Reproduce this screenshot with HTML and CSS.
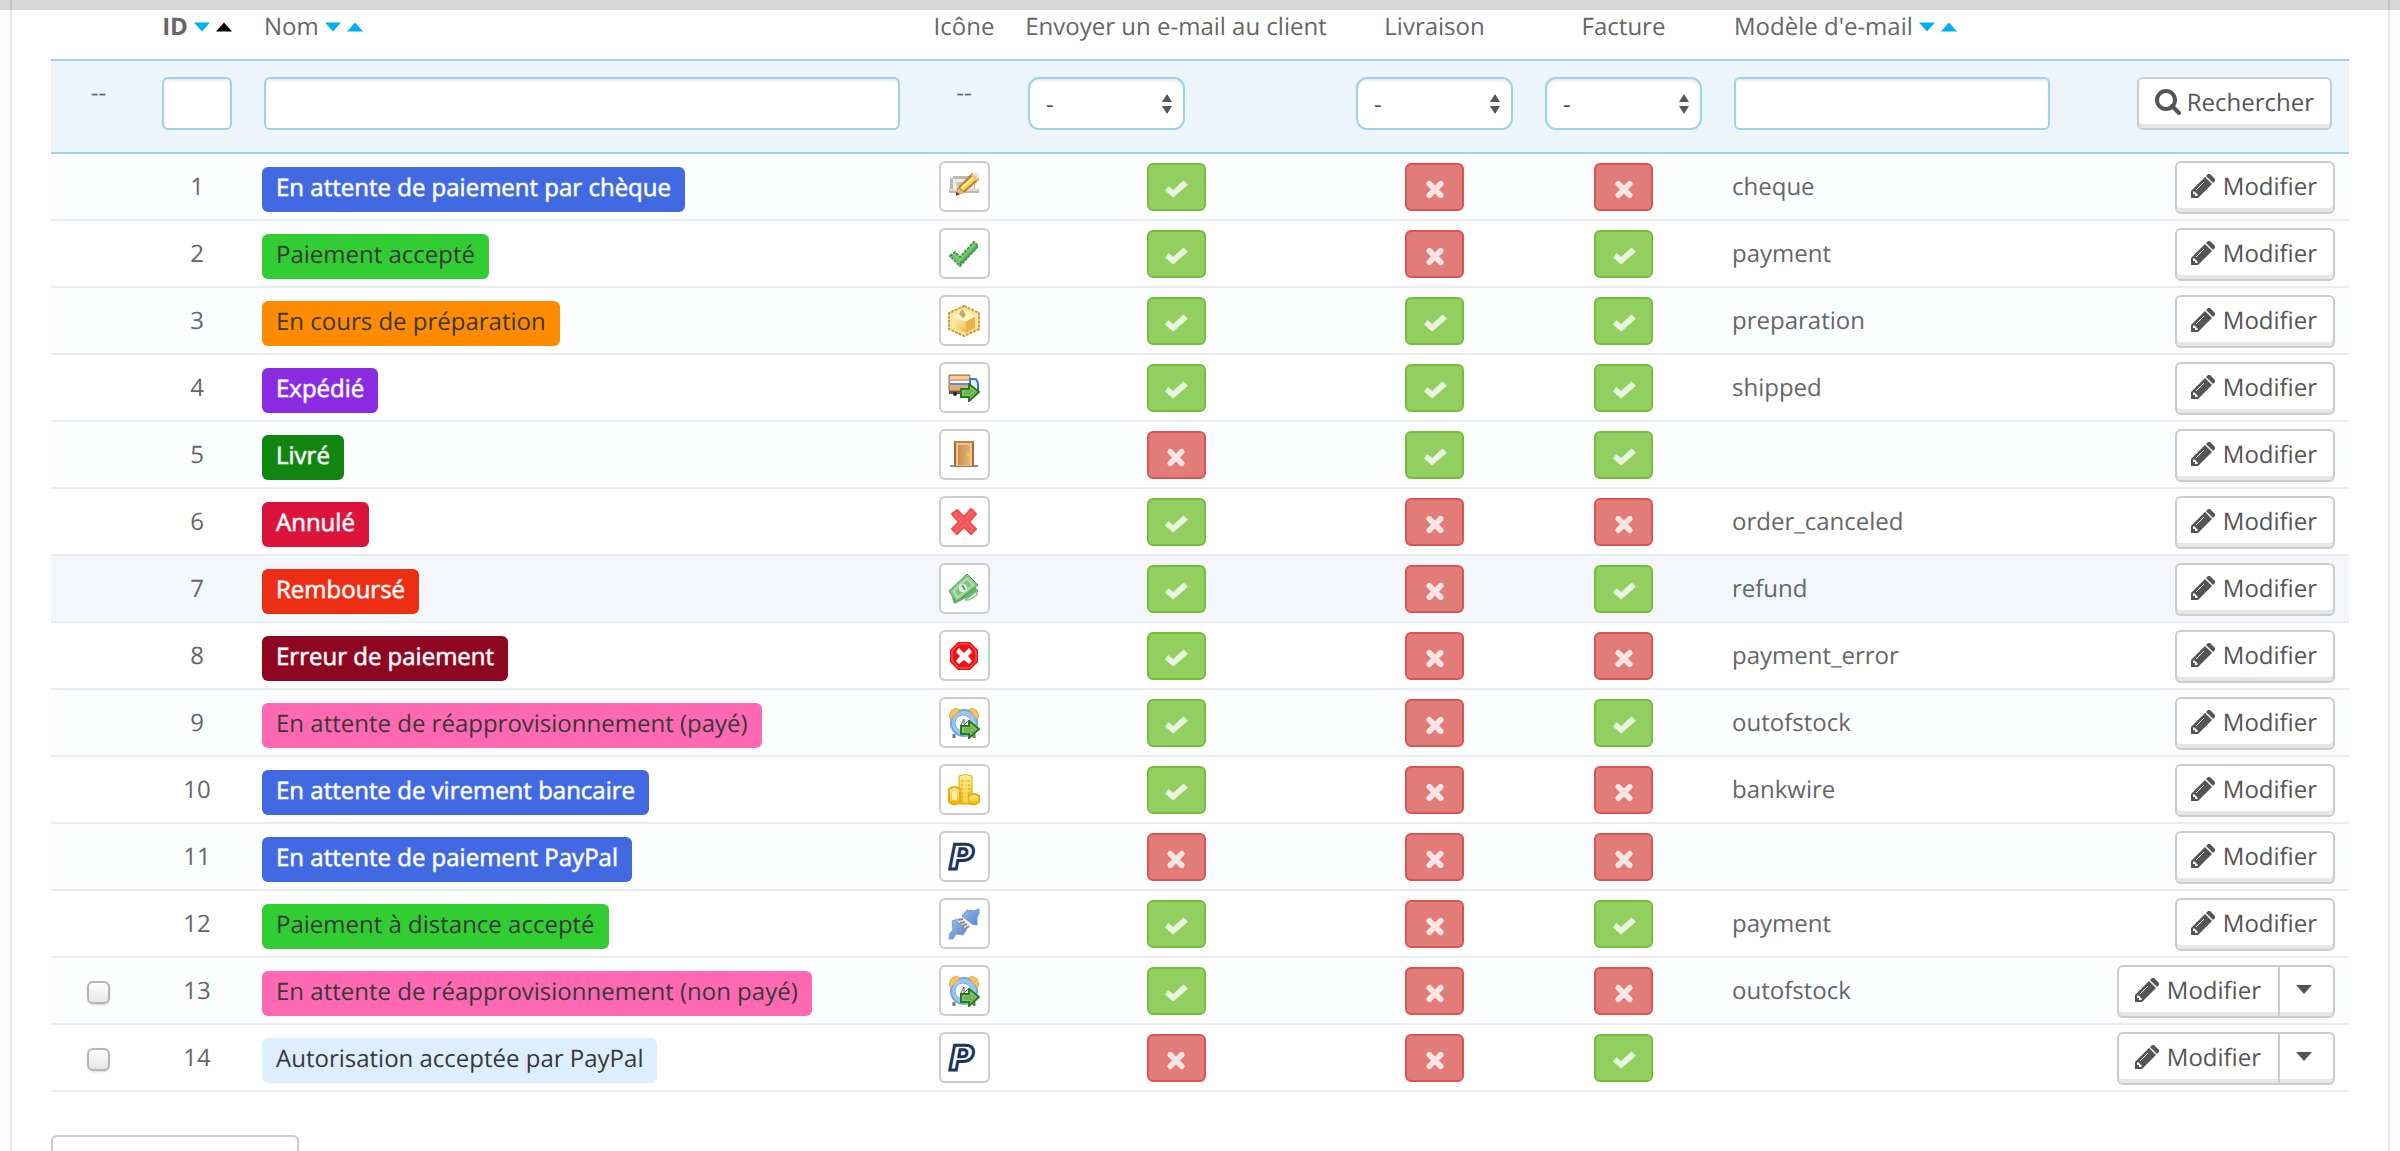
FILE: index.html
```html
<!DOCTYPE html>
<html lang="fr">
<head>
<meta charset="utf-8">
<title>Statuts de commande</title>
<link rel="stylesheet" href="styles.css">
</head>
<body>
<svg class="sprite" aria-hidden="true">
  <defs>
    <linearGradient id="g-gold" x1="0" y1="0" x2="0" y2="1"><stop offset="0" stop-color="#fff0a0"/><stop offset="1" stop-color="#f0b400"/></linearGradient>
    <linearGradient id="g-door" x1="0" y1="0" x2="1" y2="0"><stop offset="0" stop-color="#c98f50"/><stop offset="1" stop-color="#e2b279"/></linearGradient>
    <linearGradient id="g-blue" x1="0" y1="0" x2="1" y2="1"><stop offset="0" stop-color="#9cbcec"/><stop offset="1" stop-color="#5583cd"/></linearGradient>
    <linearGradient id="g-box" x1="0" y1="0" x2="1" y2="1"><stop offset="0" stop-color="#fff2b8"/><stop offset="1" stop-color="#eebd4c"/></linearGradient>
  </defs>
  <symbol id="i-cheque" viewBox="0 0 32 32">
    <path d="M2 18V7h3V5h22v13h4v4H1v-4z" fill="#b9bbb9"/>
    <path d="M5 8h21v10H5z" fill="#eceeea"/><path d="M8 11h9v4H8z" fill="#c6cac4"/><path d="M2 19h28" stroke="#d9dbd9" stroke-width="2"/>
    <path d="M9 17 24 2h4l3 3v4L16 22l-7 2z" fill="#c87f25"/>
    <path d="M12 17 25 5l4 3-14 12z" fill="#fbd53c"/><path d="m13 16 12-11 2 1-13 12z" fill="#fff3a0"/>
    <path d="m23 4 2-2h3l3 3v3l-2 2z" fill="#efbd91"/><path d="m25 3 4 1 1 3" stroke="#fbeee2" stroke-width="2" fill="none"/>
    <path d="m10 17 6 5-7 2z" fill="#edb786"/><path d="m8 21 4 2-4 2z" fill="#6b3b1c"/>
  </symbol>
  <symbol id="i-tick" viewBox="0 0 32 32">
    <path d="m2 18 5-4 5 5L26 4l4 4-18 20z" fill="#83cb7b" stroke="#3f9a44" stroke-width="2" stroke-dasharray="3 1"/>
    <path d="m5 18 7 6L27 8" fill="none" stroke="#6cbf69" stroke-width="2"/><path d="M12 26 29 9" stroke="#4d994e" stroke-width="2"/>
  </symbol>
  <symbol id="i-box" viewBox="0 0 32 32">
    <path d="M16 1 31 8v16l-15 7L1 24V8z" fill="#fbe6a4" stroke="#d59b30" stroke-width="2" stroke-dasharray="3 1"/>
    <path d="M5 11 16 5l11 6-11 5z" fill="#fff3bf"/><path d="m5 12 13 4v12L5 23z" fill="url(#g-box)"/><path d="m18 16 9-5v12l-9 5z" fill="#eab346"/>
    <path d="m14 4 4 6-3 3-4-4z" fill="#caa765"/><path d="m5 12 13 4 9-5" stroke="#fffbe0" stroke-width="1" fill="none"/>
  </symbol>
  <symbol id="i-arrow" viewBox="0 0 20 19">
    <path d="M1 6h8V1l10 8-10 9v-4H1z" fill="#85c66a" stroke="#2c7a1d" stroke-width="2"/><path d="M4 9h7v-2l4 3-4 3v-2H4" fill="none" stroke="#5aa243" stroke-width="1"/>
  </symbol>
  <symbol id="i-truck" viewBox="0 0 32 32">
    <path d="M1 3h21v16H1z" fill="#e6ab73" stroke="#9a6a3f"/><path d="M2 4h19v3H2z" fill="#f5cda3"/>
    <path d="M2 9h19v4H2z" fill="#f2f6fb"/><path d="M2 11h19v2H2z" fill="#4f93e0"/>
    <path d="M22 7h6l2 4v7h-8z" fill="#e6effa" stroke="#3e78cf" stroke-width="2"/><path d="M1 19h21v3H1z" fill="#5a5a5a"/>
    <circle cx="7" cy="22" r="2" fill="#222"/><circle cx="14" cy="22" r="2" fill="#444"/>
    <use href="#i-arrow" x="12" y="11" width="20" height="19"/>
  </symbol>
  <symbol id="i-door" viewBox="0 0 32 32">
    <path d="M2 26h28v2H2z" fill="#86909a"/><path d="M6 2h20v26H6z" fill="#ab6c31"/><path d="M8 4h16v23H8z" fill="#f0c592"/>
    <path d="M10 6h12v20H10z" fill="url(#g-door)"/><path d="M7 2h18v2H7z" fill="#c4834a"/><circle cx="21" cy="16" r="2" fill="#ffc62b"/>
  </symbol>
  <symbol id="i-cross" viewBox="0 0 32 32">
    <path d="m9 4 7 7 7-8 5 5-7 8 7 7-5 5-7-7-7 7-5-5 7-7-7-8z" fill="#f86a6a" stroke="#f6484d" stroke-width="2" stroke-linejoin="round"/>
    <path d="m9 8 14 16M24 8 8 24" stroke="#e95555" stroke-width="2"/>
  </symbol>
  <symbol id="i-cash" viewBox="0 0 32 32">
    <path d="m6 31-2-6L26 13l4 4-1 3z" fill="#6db26b"/><path d="m17 27 12-9v4l-8 5z" fill="#dcefd8" stroke="#68ad68"/>
    <path d="M1 18 19 1l11 11L8 29z" fill="#83c882" stroke="#479d52"/><path d="M4 18 19 4l8 8L9 26z" fill="#b0dfad"/>
    <path d="M7 18 19 7l5 5-14 11z" fill="#7fc480"/><circle cx="15" cy="15" r="4" fill="#eef8ec"/><path d="m14 12 3 5" stroke="#56a35b" stroke-width="2"/>
  </symbol>
  <symbol id="i-stop" viewBox="0 0 32 32">
    <path d="M10 2h12l8 8v12l-8 8H10l-8-8V10z" fill="#f11119"/><path d="M11 4h10l7 7v10l-7 7H11l-7-7V11z" fill="none" stroke="#fb6c6c" stroke-width="1"/>
    <path d="m8 12 3-4 5 5 5-5 3 4-4 4 4 5-3 3-5-4-5 4-3-3 4-5z" fill="#fff"/>
  </symbol>
  <symbol id="i-clock" viewBox="0 0 32 32">
    <path d="M6 27v4m20-4v4" stroke="#777" stroke-width="3"/><circle cx="16" cy="16" r="14" fill="#6fa8dd"/><circle cx="16" cy="16" r="12" fill="#9cc7ee"/>
    <circle cx="15" cy="16" r="8" fill="#f7faff" stroke="#78acdf"/><path d="m13 18 3-6v6l4-4" fill="none" stroke="#666" stroke-width="1"/>
    <path d="m1 10 2-6 5-3 4 2-9 9z" fill="#f7c45c" stroke="#e8a636"/><path d="m31 10-2-6-5-3-3 2 8 9z" fill="#f7c45c" stroke="#e8a636"/>
    <use href="#i-arrow" x="12" y="13" width="20" height="19"/>
  </symbol>
  <symbol id="i-coins" viewBox="0 0 32 32">
    <path d="M11 2q6-3 13 0v28H11z" fill="url(#g-gold)" stroke="#e8a800"/><path d="M13 7h9M13 11h9M13 15h9M13 19h9M13 23h9" stroke="#d9a010"/>
    <path d="M1 15q5-4 11 0v13q-5 5-11 0z" fill="url(#g-gold)" stroke="#e8ac10" stroke-width="2"/><path d="M4 18q3-2 5 0v8H4z" fill="#ffefa3"/>
    <path d="M20 22q6-4 11 0v6q-6 5-11 0z" fill="url(#g-gold)" stroke="#e8ac10" stroke-width="2"/><path d="M15 4h5v25h-5z" fill="#ffef8c" opacity=".5"/>
  </symbol>
  <symbol id="i-plug" viewBox="0 0 32 32">
    <path d="m1 31 1-6 3-3-1-9 6-2 9 10-4 6-7-1-3 5z" fill="url(#g-blue)" stroke="#7a9fd9"/>
    <path d="m14 8 5-6 7 1 5-2v5l-2 3v8l-7-1z" fill="url(#g-blue)" stroke="#7197d6"/>
    <path d="m9 12 4-4 12 9-5 6z" fill="#f6f6f6"/><path d="m10 12 5-1m-3 4 5-1m-3 4 5-2m-2 5 4-3" stroke="#8a8a8a" stroke-width="2"/>
  </symbol>
  <symbol id="i-pencil" viewBox="0 0 24 24">
    <path d="M0 24v-7L14 3l7 7L7 24z"/><path d="m15 2 2-2h2l5 5v2l-2 2z"/><path d="m5 16 8-8" stroke="#fff" stroke-width="1"/><path d="M2 18v2h2v2h2l1-1-4-4z" fill="#fff"/>
  </symbol>
  <symbol id="i-search" viewBox="0 0 26 26"><circle cx="11" cy="11" r="9" fill="none" stroke="currentColor" stroke-width="4"/><path d="m17 17 7 7" stroke="currentColor" stroke-width="4" stroke-linecap="round"/></symbol>
  <symbol id="i-ok" viewBox="0 0 24 20"><path d="M1 11 4 7l5 4L20 1l4 4L9 18z" stroke="currentColor" stroke-linejoin="round"/></symbol>
  <symbol id="i-no" viewBox="0 0 20 20"><path d="m4 4 12 12M16 4 4 16" stroke="currentColor" stroke-width="6" stroke-linecap="round"/></symbol>
  <symbol id="i-down" viewBox="0 0 16 9"><path d="M0 0h16L8 9z"/></symbol>
  <symbol id="i-up" viewBox="0 0 16 9"><path d="M0 9h16L8 0z"/></symbol>
  <symbol id="i-updown" viewBox="0 0 10 20"><path d="M5 0l5 8H0zM5 20l5-8H0z"/></symbol>
</svg>
<div class="topbar"></div>
<main class="panel">
  <table class="grid">
    <colgroup><col class="c-check"><col class="c-id"><col class="c-name"><col class="c-icon"><col class="c-mail"><col class="c-flag"><col class="c-flag"><col class="c-model"><col class="c-act"></colgroup>
    <thead>
      <tr class="titles">
        <th></th>
        <th class="mid"><div class="sort"><b>ID</b><a href="#" aria-label="ID décroissant"><svg><use href="#i-down"/></svg></a><a href="#" class="on" aria-label="ID croissant"><svg><use href="#i-up"/></svg></a></div></th>
        <th><div class="sort">Nom<a href="#" aria-label="Nom décroissant"><svg><use href="#i-down"/></svg></a><a href="#" aria-label="Nom croissant"><svg><use href="#i-up"/></svg></a></div></th>
        <th class="mid">Icône</th>
        <th class="mid">Envoyer un e-mail au client</th>
        <th class="mid">Livraison</th>
        <th class="mid">Facture</th>
        <th><div class="sort">Modèle d'e-mail<a href="#" aria-label="Modèle décroissant"><svg><use href="#i-down"/></svg></a><a href="#" aria-label="Modèle croissant"><svg><use href="#i-up"/></svg></a></div></th>
        <th></th>
      </tr>
      <tr class="filters">
        <th class="mid">--</th>
        <th><input type="text" aria-label="ID"></th>
        <th><input type="text" aria-label="Nom"></th>
        <th class="mid">--</th>
        <th><div class="pick"><select aria-label="Envoyer un e-mail au client"><option>-</option></select><svg><use href="#i-updown"/></svg></div></th>
        <th><div class="pick"><select aria-label="Livraison"><option>-</option></select><svg><use href="#i-updown"/></svg></div></th>
        <th><div class="pick"><select aria-label="Facture"><option>-</option></select><svg><use href="#i-updown"/></svg></div></th>
        <th><input type="text" aria-label="Modèle d'e-mail"></th>
        <th class="end"><button class="btn search"><svg><use href="#i-search"/></svg>Rechercher</button></th>
      </tr>
    </thead>
    <tbody>
      <tr><td></td><td class="mid">1</td><td><span class="tag royal">En attente de paiement par chèque</span></td><td class="mid"><span class="thumb"><svg><use href="#i-cheque"/></svg></span></td><td class="mid"><a href="#" class="flag yes" aria-label="Oui"><svg><use href="#i-ok"/></svg></a></td><td class="mid"><a href="#" class="flag no" aria-label="Non"><svg><use href="#i-no"/></svg></a></td><td class="mid"><a href="#" class="flag no" aria-label="Non"><svg><use href="#i-no"/></svg></a></td><td>cheque</td><td class="end"><button class="btn"><svg><use href="#i-pencil"/></svg>Modifier</button></td></tr>
      <tr><td></td><td class="mid">2</td><td><span class="tag lime">Paiement accepté</span></td><td class="mid"><span class="thumb"><svg><use href="#i-tick"/></svg></span></td><td class="mid"><a href="#" class="flag yes" aria-label="Oui"><svg><use href="#i-ok"/></svg></a></td><td class="mid"><a href="#" class="flag no" aria-label="Non"><svg><use href="#i-no"/></svg></a></td><td class="mid"><a href="#" class="flag yes" aria-label="Oui"><svg><use href="#i-ok"/></svg></a></td><td>payment</td><td class="end"><button class="btn"><svg><use href="#i-pencil"/></svg>Modifier</button></td></tr>
      <tr><td></td><td class="mid">3</td><td><span class="tag orange">En cours de préparation</span></td><td class="mid"><span class="thumb"><svg><use href="#i-box"/></svg></span></td><td class="mid"><a href="#" class="flag yes" aria-label="Oui"><svg><use href="#i-ok"/></svg></a></td><td class="mid"><a href="#" class="flag yes" aria-label="Oui"><svg><use href="#i-ok"/></svg></a></td><td class="mid"><a href="#" class="flag yes" aria-label="Oui"><svg><use href="#i-ok"/></svg></a></td><td>preparation</td><td class="end"><button class="btn"><svg><use href="#i-pencil"/></svg>Modifier</button></td></tr>
      <tr><td></td><td class="mid">4</td><td><span class="tag violet">Expédié</span></td><td class="mid"><span class="thumb"><svg><use href="#i-truck"/></svg></span></td><td class="mid"><a href="#" class="flag yes" aria-label="Oui"><svg><use href="#i-ok"/></svg></a></td><td class="mid"><a href="#" class="flag yes" aria-label="Oui"><svg><use href="#i-ok"/></svg></a></td><td class="mid"><a href="#" class="flag yes" aria-label="Oui"><svg><use href="#i-ok"/></svg></a></td><td>shipped</td><td class="end"><button class="btn"><svg><use href="#i-pencil"/></svg>Modifier</button></td></tr>
      <tr><td></td><td class="mid">5</td><td><span class="tag green">Livré</span></td><td class="mid"><span class="thumb"><svg><use href="#i-door"/></svg></span></td><td class="mid"><a href="#" class="flag no" aria-label="Non"><svg><use href="#i-no"/></svg></a></td><td class="mid"><a href="#" class="flag yes" aria-label="Oui"><svg><use href="#i-ok"/></svg></a></td><td class="mid"><a href="#" class="flag yes" aria-label="Oui"><svg><use href="#i-ok"/></svg></a></td><td></td><td class="end"><button class="btn"><svg><use href="#i-pencil"/></svg>Modifier</button></td></tr>
      <tr><td></td><td class="mid">6</td><td><span class="tag crimson">Annulé</span></td><td class="mid"><span class="thumb"><svg><use href="#i-cross"/></svg></span></td><td class="mid"><a href="#" class="flag yes" aria-label="Oui"><svg><use href="#i-ok"/></svg></a></td><td class="mid"><a href="#" class="flag no" aria-label="Non"><svg><use href="#i-no"/></svg></a></td><td class="mid"><a href="#" class="flag no" aria-label="Non"><svg><use href="#i-no"/></svg></a></td><td>order_canceled</td><td class="end"><button class="btn"><svg><use href="#i-pencil"/></svg>Modifier</button></td></tr>
      <tr class="active"><td></td><td class="mid">7</td><td><span class="tag red">Remboursé</span></td><td class="mid"><span class="thumb"><svg><use href="#i-cash"/></svg></span></td><td class="mid"><a href="#" class="flag yes" aria-label="Oui"><svg><use href="#i-ok"/></svg></a></td><td class="mid"><a href="#" class="flag no" aria-label="Non"><svg><use href="#i-no"/></svg></a></td><td class="mid"><a href="#" class="flag yes" aria-label="Oui"><svg><use href="#i-ok"/></svg></a></td><td>refund</td><td class="end"><button class="btn"><svg><use href="#i-pencil"/></svg>Modifier</button></td></tr>
      <tr><td></td><td class="mid">8</td><td><span class="tag maroon">Erreur de paiement</span></td><td class="mid"><span class="thumb"><svg><use href="#i-stop"/></svg></span></td><td class="mid"><a href="#" class="flag yes" aria-label="Oui"><svg><use href="#i-ok"/></svg></a></td><td class="mid"><a href="#" class="flag no" aria-label="Non"><svg><use href="#i-no"/></svg></a></td><td class="mid"><a href="#" class="flag no" aria-label="Non"><svg><use href="#i-no"/></svg></a></td><td>payment_error</td><td class="end"><button class="btn"><svg><use href="#i-pencil"/></svg>Modifier</button></td></tr>
      <tr><td></td><td class="mid">9</td><td><span class="tag pink">En attente de réapprovisionnement (payé)</span></td><td class="mid"><span class="thumb"><svg><use href="#i-clock"/></svg></span></td><td class="mid"><a href="#" class="flag yes" aria-label="Oui"><svg><use href="#i-ok"/></svg></a></td><td class="mid"><a href="#" class="flag no" aria-label="Non"><svg><use href="#i-no"/></svg></a></td><td class="mid"><a href="#" class="flag yes" aria-label="Oui"><svg><use href="#i-ok"/></svg></a></td><td>outofstock</td><td class="end"><button class="btn"><svg><use href="#i-pencil"/></svg>Modifier</button></td></tr>
      <tr><td></td><td class="mid">10</td><td><span class="tag royal">En attente de virement bancaire</span></td><td class="mid"><span class="thumb"><svg><use href="#i-coins"/></svg></span></td><td class="mid"><a href="#" class="flag yes" aria-label="Oui"><svg><use href="#i-ok"/></svg></a></td><td class="mid"><a href="#" class="flag no" aria-label="Non"><svg><use href="#i-no"/></svg></a></td><td class="mid"><a href="#" class="flag no" aria-label="Non"><svg><use href="#i-no"/></svg></a></td><td>bankwire</td><td class="end"><button class="btn"><svg><use href="#i-pencil"/></svg>Modifier</button></td></tr>
      <tr><td></td><td class="mid">11</td><td><span class="tag royal">En attente de paiement PayPal</span></td><td class="mid"><span class="thumb"><svg viewBox="0 0 32 32"><text x="1" y="28" class="pp">P</text></svg></span></td><td class="mid"><a href="#" class="flag no" aria-label="Non"><svg><use href="#i-no"/></svg></a></td><td class="mid"><a href="#" class="flag no" aria-label="Non"><svg><use href="#i-no"/></svg></a></td><td class="mid"><a href="#" class="flag no" aria-label="Non"><svg><use href="#i-no"/></svg></a></td><td></td><td class="end"><button class="btn"><svg><use href="#i-pencil"/></svg>Modifier</button></td></tr>
      <tr><td></td><td class="mid">12</td><td><span class="tag lime">Paiement à distance accepté</span></td><td class="mid"><span class="thumb"><svg><use href="#i-plug"/></svg></span></td><td class="mid"><a href="#" class="flag yes" aria-label="Oui"><svg><use href="#i-ok"/></svg></a></td><td class="mid"><a href="#" class="flag no" aria-label="Non"><svg><use href="#i-no"/></svg></a></td><td class="mid"><a href="#" class="flag yes" aria-label="Oui"><svg><use href="#i-ok"/></svg></a></td><td>payment</td><td class="end"><button class="btn"><svg><use href="#i-pencil"/></svg>Modifier</button></td></tr>
      <tr><td class="mid"><input type="checkbox" aria-label="Sélectionner 13"></td><td class="mid">13</td><td><span class="tag pink">En attente de réapprovisionnement (non payé)</span></td><td class="mid"><span class="thumb"><svg><use href="#i-clock"/></svg></span></td><td class="mid"><a href="#" class="flag yes" aria-label="Oui"><svg><use href="#i-ok"/></svg></a></td><td class="mid"><a href="#" class="flag no" aria-label="Non"><svg><use href="#i-no"/></svg></a></td><td class="mid"><a href="#" class="flag no" aria-label="Non"><svg><use href="#i-no"/></svg></a></td><td>outofstock</td><td class="end"><div class="group"><button class="btn"><svg><use href="#i-pencil"/></svg>Modifier</button><button class="btn more" aria-label="Plus d'actions"><svg><use href="#i-down"/></svg></button></div></td></tr>
      <tr><td class="mid"><input type="checkbox" aria-label="Sélectionner 14"></td><td class="mid">14</td><td><span class="tag pale">Autorisation acceptée par PayPal</span></td><td class="mid"><span class="thumb"><svg viewBox="0 0 32 32"><text x="1" y="28" class="pp">P</text></svg></span></td><td class="mid"><a href="#" class="flag no" aria-label="Non"><svg><use href="#i-no"/></svg></a></td><td class="mid"><a href="#" class="flag no" aria-label="Non"><svg><use href="#i-no"/></svg></a></td><td class="mid"><a href="#" class="flag yes" aria-label="Oui"><svg><use href="#i-ok"/></svg></a></td><td></td><td class="end"><div class="group"><button class="btn"><svg><use href="#i-pencil"/></svg>Modifier</button><button class="btn more" aria-label="Plus d'actions"><svg><use href="#i-down"/></svg></button></div></td></tr>
    </tbody>
  </table>
  <button class="btn bulk" aria-label="Actions groupées"></button>
</main>
</body>
</html>
```
FILE: styles.css
```css
* { box-sizing: border-box; }
body {
  margin: 0;
  height: 100vh;
  overflow: hidden;
  background: #fdfdfd;
  color: #666;
  font: 24px/32px "Open Sans", "Noto Sans", sans-serif;
  text-rendering: geometricPrecision;
}
svg { display: block; fill: currentColor; }
.sprite { position: absolute; width: 0; height: 0; }
.topbar { position: fixed; inset: 0 0 auto; height: 10px; background: rgba(0, 0, 0, .15); }

.panel {
  margin: 0 10px;
  padding: 0 39px;
  min-height: 100vh;
  background: #fefefe;
  border: solid #e6e6e6;
  border-width: 0 2px;
}
.grid { width: 100%; table-layout: fixed; border-collapse: separate; border-spacing: 0; }
.c-check { width: 95px; }
.c-id { width: 102px; }
.c-icon { width: 96px; }
.c-mail { width: 328px; }
.c-flag { width: 189px; }
.c-model { width: 348px; }
.c-act { width: 283px; }

th { padding: 0 16px; text-align: left; font-weight: 400; white-space: nowrap; }
td { padding: 0 14px; height: 67px; border-bottom: 2px solid #eaedef; vertical-align: middle; }
.mid { text-align: center; padding: 0; }
.end { text-align: right; }

.titles th { height: 61px; padding-bottom: 6px; border-bottom: 2px solid #9fd0ee; }
.sort { display: flex; align-items: center; }
.mid .sort { justify-content: center; }
.sort a { margin-left: 6px; color: #00aff0; }
.sort a.on { color: #000; }
.sort svg { width: 16px; height: 10px; }

.filters th { height: 93px; padding-top: 16px; vertical-align: top; background: #ebf5fb; border-bottom: 2px solid #9fd0ee; }
.filters .end { padding-right: 17px; }
input[type="text"], select {
  display: block;
  width: 100%;
  height: 53px;
  border: 2px solid #9fd0ee;
  border-radius: 6px;
  background: #fff;
  box-shadow: inset 0 2px 3px rgba(0, 0, 0, .08);
  font: inherit;
  color: #555;
}
.pick { display: grid; width: 157px; align-items: center; color: #555; }
.pick select, .pick svg { grid-area: 1 / 1; }
.pick select { appearance: none; padding: 0 16px; border-radius: 11px; }
.pick svg { justify-self: end; margin-right: 13px; width: 10px; height: 20px; pointer-events: none; }

tbody tr:nth-child(odd) { background: #fcfdfe; }
tbody tr.active { background: #f3f7fb; }

.tag { display: inline-block; padding: 5px 14px 8px; margin-top: 5px; border-radius: 6px; color: #383838; vertical-align: middle; }
.royal { background: #4169e1; }
.lime { background: #32cd32; }
.orange { background: #ff8c00; }
.violet { background: #8a2be2; }
.green { background: #108510; }
.crimson { background: #dc143c; }
.red { background: #ec2e15; }
.maroon { background: #8f0621; }
.pink { background: #ff69b4; }
.pale { background: #ddeeff; }
.royal, .violet, .green, .crimson, .red, .maroon { color: #fff; -webkit-text-stroke: 1px rgba(255, 255, 255, .6); }

.thumb, .flag { display: inline-grid; place-content: center; vertical-align: middle; }
.thumb { width: 51px; height: 51px; border: 2px solid #ccc; border-radius: 6px; background: #fff; }
.thumb svg { width: 32px; height: 32px; }
.pp { font: italic 700 34px "DejaVu Sans", sans-serif; fill: #fff; stroke: #1b355f; stroke-width: 3px; }
.flag { width: 59px; height: 48px; padding-top: 5px; border: 2px solid; border-radius: 6px; }
.flag svg { width: 24px; height: 19px; }
.yes { background: #92cf60; border-color: #76bd3a; }
.no { background: #e27c79; border-color: #dc5451; }
.yes svg { color: #e9f5df; }
.no svg { color: #f9e5e4; }

.btn {
  display: inline-flex;
  align-items: center;
  justify-content: center;
  gap: 8px;
  height: 53px;
  padding: 0 16px 1px 14px;
  border: 2px solid #ccc;
  border-radius: 6px;
  background: #fff;
  box-shadow: inset 0 -4px #e6e6e6;
  color: #555;
  font: inherit;
  text-rendering: inherit;
  vertical-align: middle;
}
.btn svg { width: 24px; height: 24px; margin-bottom: 3px; }
.search { gap: 6px; padding-left: 16px; }
.search svg { width: 26px; height: 26px; }
td.end { padding-top: 2px; }
.group { display: inline-flex; vertical-align: middle; }
.group .btn:first-child { border-radius: 6px 0 0 6px; padding: 0 17px 1px 16px; }
.group .more { width: 57px; padding: 0 6px 1px 0; margin-left: -2px; border-radius: 0 6px 6px 0; }
.group .more svg { width: 16px; height: 9px; }
.bulk { width: 248px; margin-top: 43px; }

input[type="checkbox"] {
  appearance: none;
  display: block;
  width: 23px;
  height: 23px;
  margin: 3px auto 0;
  border: 2px solid #b5b5b5;
  border-radius: 6px;
  background: linear-gradient(#fff, #e6e6e6);
  box-shadow: 0 1px 2px rgba(0, 0, 0, .15);
}
```
